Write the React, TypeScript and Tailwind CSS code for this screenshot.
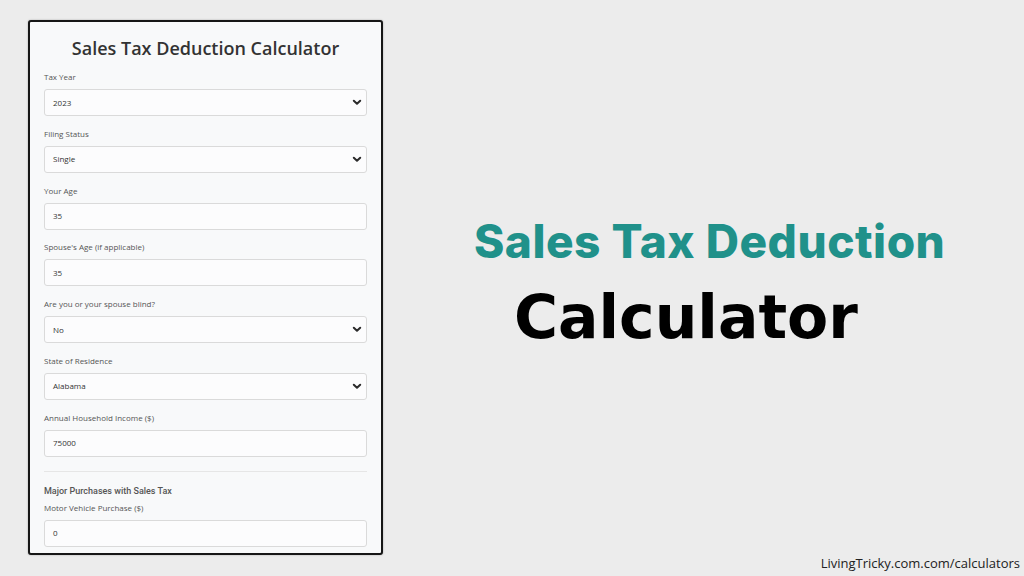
import React from 'react';

type Field = {
  label: string;
  value: string;
  select?: boolean;
};

const fields: Field[] = [
  { label: 'Tax Year', value: '2023', select: true },
  { label: 'Filing Status', value: 'Single', select: true },
  { label: 'Your Age', value: '35' },
  { label: "Spouse's Age (if applicable)", value: '35' },
  { label: 'Are you or your spouse blind?', value: 'No', select: true },
  { label: 'State of Residence', value: 'Alabama', select: true },
  { label: 'Annual Household Income ($)', value: '75000' },
];

function Chevron() {
  return (
    <svg width="10" height="7" viewBox="0 0 10 7" className="shrink-0">
      <path d="M1.8 1.8 L5 4.8 L8.2 1.8" fill="none" stroke="#2b2b2b" strokeWidth="2" strokeLinecap="round" strokeLinejoin="round" />
    </svg>
  );
}

function FieldRow({ field, last }: { field: Field; last?: boolean }) {
  return (
    <div className={last ? '' : 'mb-[11.8px]'}>
      <div className="text-[8px] leading-[12px] text-[#555] mb-[6px]">{field.label}</div>
      <div className="h-[27px] rounded-[3px] border border-[#dadada] bg-[#fcfcfd] flex items-center justify-between pl-[8px] pr-[4px]">
        <span className="text-[8px] text-[#333]">{field.value}</span>
        {field.select && <Chevron />}
      </div>
    </div>
  );
}

export default function App() {
  return (
    <div className="w-[1024px] h-[576px] bg-[#ececec] overflow-hidden flex flex-col pt-[20px] pl-[28px]" style={{ fontFamily: '"Open Sans", "Liberation Sans", sans-serif' }}>
      <div className="flex h-[535px]">
        <div className="w-[355px] h-full border-2 border-[#161616] rounded-[3px] bg-[#f8f9fa] pt-[13px] px-[14px] shadow-[0_0_2px_rgba(0,0,0,0.3)]">
          <h1 className="text-[18px] leading-[26px] text-[#333] font-semibold text-center mb-[10px]">Sales Tax Deduction Calculator</h1>
          {fields.map((f, i) => (
            <FieldRow key={f.label} field={f} last={i === fields.length - 1} />
          ))}
          <div className="border-t border-[#e6e6e6] mt-[14px] mb-[12px]" />
          <div className="text-[9px] leading-[14px] font-medium text-[#555] mb-[4px]" style={{ fontFamily: 'Roboto, "Liberation Sans", sans-serif' }}>
            Major Purchases with Sales Tax
          </div>
          <FieldRow field={{ label: 'Motor Vehicle Purchase ($)', value: '0' }} last />
        </div>

        <div className="flex-1 flex flex-col pt-[193px]" style={{ fontFamily: 'Inter, "DejaVu Sans", sans-serif' }}>
          <div className="pl-[91px] text-[46px] leading-[56px] font-extrabold text-[#20918a] tracking-[0.5px]">Sales Tax Deduction</div>
          <div className="pl-[131px] mt-[14px] text-[60px] leading-[68px] font-bold text-black" style={{ fontFamily: '"DejaVu Sans", sans-serif' }}>Calculator</div>
        </div>
      </div>
      <div className="flex justify-end pr-[4px] text-[13px] leading-[16px] text-[#222]">LivingTricky.com.com/calculators</div>
    </div>
  );
}
